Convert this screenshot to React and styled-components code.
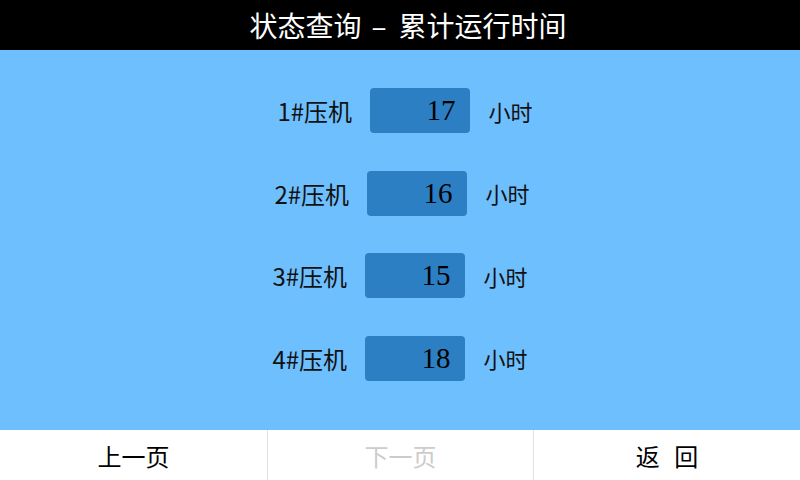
import React from "react";
import styled, { createGlobalStyle } from "styled-components";

const GlobalStyle = createGlobalStyle`
  html, body {
    margin: 0;
    padding: 0;
    width: 800px;
    height: 480px;
    overflow: hidden;
  }
  body {
    font-family: "Noto Sans CJK SC", "Noto Sans", sans-serif;
  }
`;

const Screen = styled.div`
  width: 800px;
  height: 480px;
  display: flex;
  flex-direction: column;
`;

const TitleBar = styled.header`
  height: 50px;
  background: #000;
  color: #fff;
  display: flex;
  align-items: center;
  justify-content: center;
  font-size: 28px;
  line-height: 1;
  white-space: nowrap;
  padding-left: 16px;
`;

const Dash = styled.span`
  margin: 0 12px 0 10px;
`;

const Body = styled.main`
  flex: 1;
  background: #6ebffe;
  display: flex;
  flex-direction: column;
  align-items: center;
  padding-top: 38px;
  gap: 37.5px;
`;

const Row = styled.div`
  display: flex;
  align-items: center;
  height: 45px;
  transform: translateX(${(p) => p.$nudge}px);
`;

const Label = styled.span`
  font-size: 24px;
  color: #111;
  width: 93px;
  white-space: nowrap;
`;

const ValueBox = styled.div`
  width: 100px;
  height: 45px;
  box-sizing: border-box;
  background: #2b7fc2;
  border-radius: 4px;
  display: flex;
  align-items: center;
  justify-content: flex-end;
  padding-right: 15px;
  font-family: "Liberation Serif", "DejaVu Serif", serif;
  font-size: 29px;
  color: #000;
`;

const Unit = styled.span`
  font-size: 22px;
  color: #111;
  margin-left: 18px;
`;

const Footer = styled.nav`
  height: 50px;
  background: #fff;
  display: grid;
  grid-template-columns: 267px 266px 267px;
`;

const FooterButton = styled.div`
  display: flex;
  align-items: center;
  justify-content: center;
  font-size: 24px;
  color: ${(p) => (p.$disabled ? "#cccccc" : "#000")};
  word-spacing: ${(p) => (p.$wide ? "9px" : "0")};
  white-space: pre;
  & + & {
    border-left: 1px solid #e2e2e2;
  }
`;

const rows = [
  { name: "1#压机", value: 17, nudge: 5 },
  { name: "2#压机", value: 16, nudge: 2 },
  { name: "3#压机", value: 15, nudge: 0 },
  { name: "4#压机", value: 18, nudge: 0 },
];

export default function App() {
  return (
    <Screen>
      <GlobalStyle />
      <TitleBar>
        状态查询<Dash>–</Dash>累计运行时间
      </TitleBar>
      <Body>
        {rows.map((r) => (
          <Row key={r.name} $nudge={r.nudge}>
            <Label>{r.name}</Label>
            <ValueBox>{r.value}</ValueBox>
            <Unit>小时</Unit>
          </Row>
        ))}
      </Body>
      <Footer>
        <FooterButton>上一页</FooterButton>
        <FooterButton $disabled>下一页</FooterButton>
        <FooterButton $wide>返 回</FooterButton>
      </Footer>
    </Screen>
  );
}
